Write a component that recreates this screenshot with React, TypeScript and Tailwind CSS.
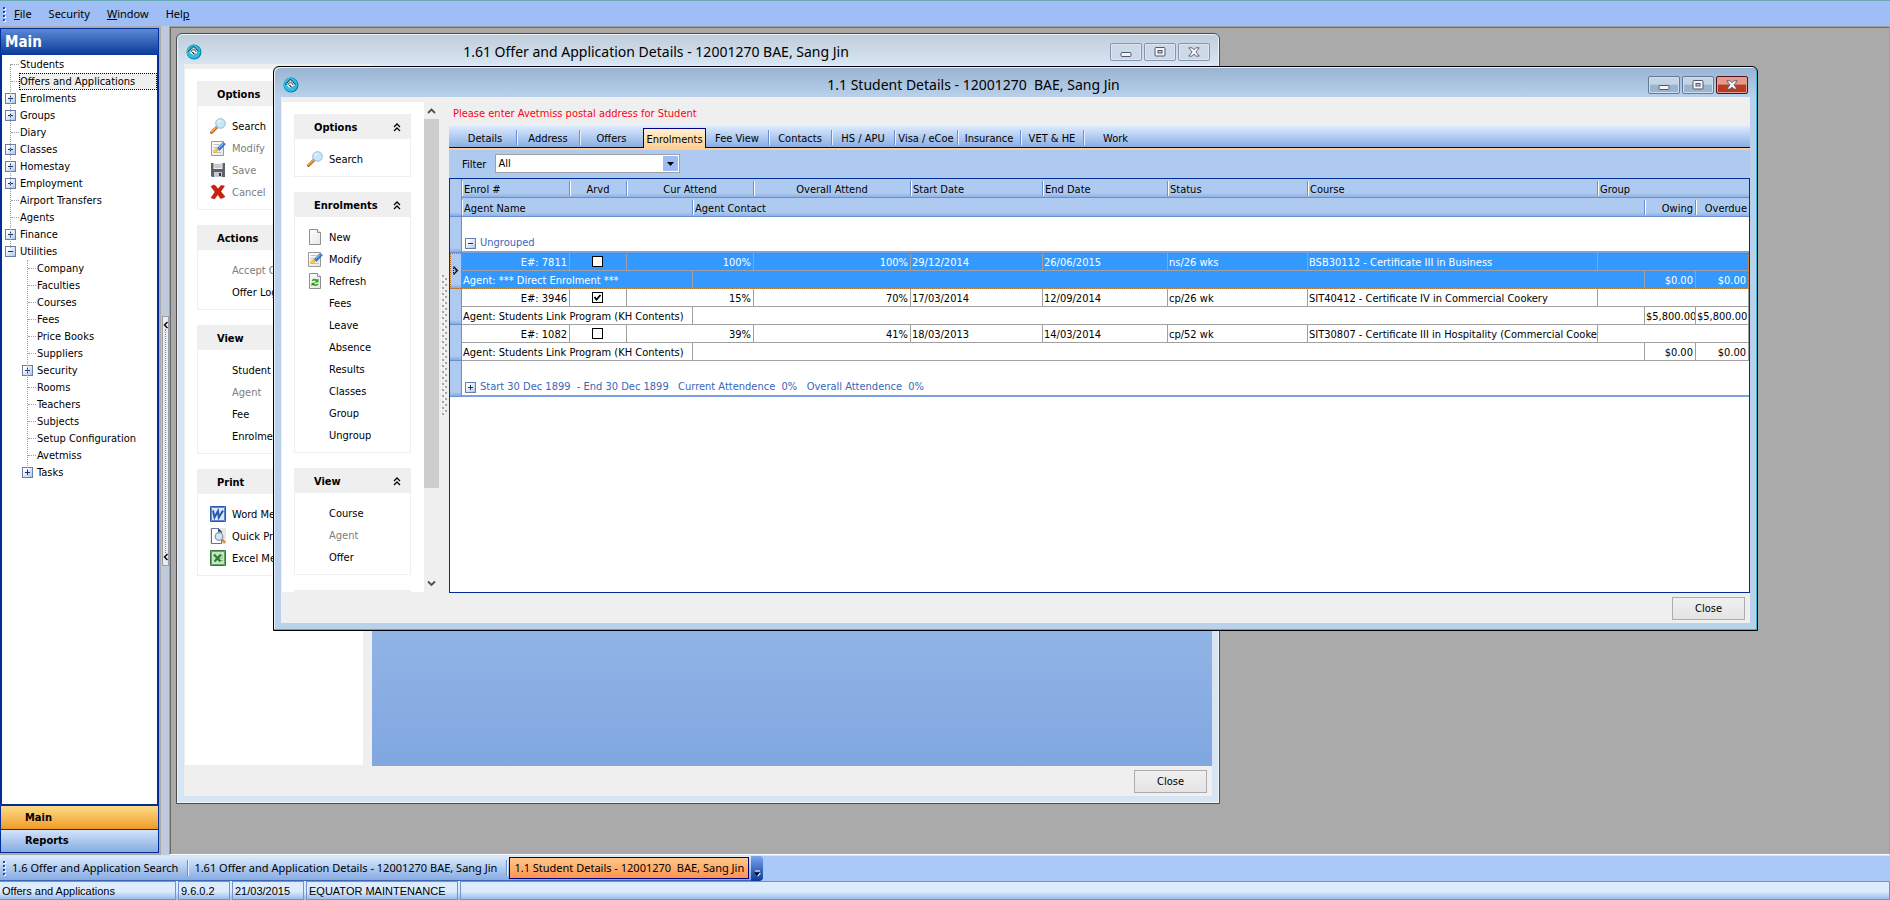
import type { ReactNode } from "react";
import { clsx } from "clsx";

type IconName = "search" | "modify" | "save" | "cancel" | "new" | "refresh" | "word" | "preview" | "excel";

interface Action {
  label: string;
  icon?: IconName;
  disabled?: boolean;
}

interface ActionGroup {
  title: string;
  items: Action[];
}

interface TreeItem {
  label: string;
  state?: "open" | "closed";
  selected?: boolean;
}

interface Enrolment {
  id: string;
  arrived: boolean;
  current: string;
  overall: string;
  start: string;
  end: string;
  status: string;
  course: string;
  agent: string;
  owing: string;
  overdue: string;
}

const rootItems: TreeItem[] = [
  { label: "Students" },
  { label: "Offers and Applications", selected: true },
  { label: "Enrolments", state: "closed" },
  { label: "Groups", state: "closed" },
  { label: "Diary" },
  { label: "Classes", state: "closed" },
  { label: "Homestay", state: "closed" },
  { label: "Employment", state: "closed" },
  { label: "Airport Transfers" },
  { label: "Agents" },
  { label: "Finance", state: "closed" },
  { label: "Utilities", state: "open" },
];

const utilityItems: TreeItem[] = [
  { label: "Company" },
  { label: "Faculties" },
  { label: "Courses" },
  { label: "Fees" },
  { label: "Price Books" },
  { label: "Suppliers" },
  { label: "Security", state: "closed" },
  { label: "Rooms" },
  { label: "Teachers" },
  { label: "Subjects" },
  { label: "Setup Configuration" },
  { label: "Avetmiss" },
  { label: "Tasks", state: "closed" },
];

const offerGroups: ActionGroup[] = [
  {
    title: "Options",
    items: [
      { label: "Search", icon: "search" },
      { label: "Modify", icon: "modify", disabled: true },
      { label: "Save", icon: "save", disabled: true },
      { label: "Cancel", icon: "cancel", disabled: true },
    ],
  },
  { title: "Actions", items: [{ label: "Accept Offer", disabled: true }, { label: "Offer Log" }] },
  {
    title: "View",
    items: [{ label: "Student" }, { label: "Agent", disabled: true }, { label: "Fee" }, { label: "Enrolment" }],
  },
  {
    title: "Print",
    items: [
      { label: "Word Merge", icon: "word" },
      { label: "Quick Print", icon: "preview" },
      { label: "Excel Merge", icon: "excel" },
    ],
  },
];

const studentGroups: ActionGroup[] = [
  { title: "Options", items: [{ label: "Search", icon: "search" }] },
  {
    title: "Enrolments",
    items: [
      { label: "New", icon: "new" },
      { label: "Modify", icon: "modify" },
      { label: "Refresh", icon: "refresh" },
      { label: "Fees" },
      { label: "Leave" },
      { label: "Absence" },
      { label: "Results" },
      { label: "Classes" },
      { label: "Group" },
      { label: "Ungroup" },
    ],
  },
  { title: "View", items: [{ label: "Course" }, { label: "Agent", disabled: true }, { label: "Offer" }] },
];

const tabs = [
  "Details", "Address", "Offers", "Enrolments", "Fee View", "Contacts",
  "HS / APU", "Visa / eCoe", "Insurance", "VET & HE", "Work",
];

const enrolments: Enrolment[] = [
  {
    id: "7811", arrived: false, current: "100%", overall: "100%", start: "29/12/2014", end: "26/06/2015",
    status: "ns/26 wks", course: "BSB30112 - Certificate III in Business",
    agent: "*** Direct Enrolment ***", owing: "$0.00", overdue: "$0.00",
  },
  {
    id: "3946", arrived: true, current: "15%", overall: "70%", start: "17/03/2014", end: "12/09/2014",
    status: "cp/26 wk", course: "SIT40412 - Certificate IV in Commercial Cookery",
    agent: "Students Link Program (KH Contents)", owing: "$5,800.00", overdue: "$5,800.00",
  },
  {
    id: "1082", arrived: false, current: "39%", overall: "41%", start: "18/03/2013", end: "14/03/2014",
    status: "cp/52 wk", course: "SIT30807 - Certificate III in Hospitality (Commercial Cookery)",
    agent: "Students Link Program (KH Contents)", owing: "$0.00", overdue: "$0.00",
  },
];

function Page() {
  return (
    <>
      <path d="M2.5 .5h8l3 3v12h-11z" fill="url(#paper)" stroke="#8f8f8f" />
      <path d="M10.5 .5v3h3" fill="#fff" stroke="#8f8f8f" />
    </>
  );
}

function ActionIcon({ name }: { name: IconName }) {
  return (
    <svg width="16" height="16" viewBox="0 0 16 16" className="shrink-0" aria-hidden="true">
      <defs>
        <linearGradient id="paper" x1="0" y1="0" x2="1" y2="1">
          <stop offset="0" stopColor="#fff" />
          <stop offset="1" stopColor="#e6e6e6" />
        </linearGradient>
      </defs>
      {name === "search" && (
        <>
          <path d="M1.5 14.5 7 9" stroke="#b5651d" strokeWidth="3" strokeLinecap="round" />
          <path d="M1.5 14 6 9.5" stroke="#f5a742" strokeWidth="1.5" strokeLinecap="round" />
          <circle cx="10.5" cy="5.5" r="4.8" fill="#c6e8fb" stroke="#9db7d3" />
          <path d="M7.5 5a3 3 0 0 1 3-2.5" stroke="#fff" fill="none" />
        </>
      )}
      {name === "new" && <Page />}
      {name === "modify" && (
        <>
          <path d="M1.5 1.5h12v14h-12z" fill="url(#paper)" stroke="#9a9a9a" />
          <path d="M3.5 4.5h6M3.5 7.5h4M3.5 12.5h8" stroke="#b9c3cc" />
          <path d="M3 12.5c0-3 2-4 4-4l1.5 1.5c-.5 2-3 3-5.5 2.5z" fill="#f3a61f" />
          <path d="M3 12.5 5 9l3 2z" fill="#ffd24a" />
          <path d="M7.5 8 13 2.5 15.5 4 9.5 10.5z" fill="#2f7fe0" stroke="#1b56ab" strokeWidth=".6" />
          <path d="M9 7.5 13.5 3.5" stroke="#9cc9ff" />
        </>
      )}
      {name === "save" && (
        <>
          <path d="M1 1h14v14H2l-1-1z" fill="#5c6268" />
          <path d="M3.5 1h9v6h-9z" fill="#eef1f3" />
          <path d="M4.5 3h7M4.5 5h7" stroke="#9aa3aa" />
          <path d="M4 10h8v5H4z" fill="#c3c9ce" />
          <path d="M9 11h2v3H9z" fill="#33383c" />
        </>
      )}
      {name === "cancel" && (
        <path
          d="M1 2.5 3.5 1l2 .8L8 5l3-3.6L14.5 2 10.8 7.5 15 12.8 12.5 14l-2 .5L7.8 10.6 4.5 15 1 13.8 5 8z"
          fill="#c9210e"
          stroke="#a51808"
          strokeWidth=".5"
        />
      )}
      {name === "refresh" && (
        <>
          <Page />
          <path d="M4.5 7.5c.8-2 4-2.5 5.5-1l1.5-1v4H7.5L8.8 8c-1-.9-2.5-.8-3 .2z" fill="#35a818" />
          <path d="M11.5 11c-.8 2-4 2.5-5.5 1l-1.5 1.2V9.8h3.700L7.2 10.800c1 .9 2.500.6 3 0z" fill="#2c9a12" />
        </>
      )}
      {name === "word" && (
        <>
          <path d="M.5 .5h15v15H.5z" fill="#dce8fa" stroke="#2a56a8" />
          <path d="M1.5 1.5h13v13h-13z" fill="none" stroke="#5e8ad4" />
          <path d="M3 4.5 4.5 11.5 8 5l.8 6.5L13 4.5" fill="none" stroke="#2b57ad" strokeWidth="2" />
        </>
      )}
      {name === "preview" && (
        <>
          <path d="M0 0h16v16H0z" fill="#e9e7e4" />
          <path d="M1.5 .5h7l3 3v12h-10z" fill="#fff" stroke="#5a72a8" />
          <path d="M8.5 .5v3h3" fill="#46536e" stroke="#46536e" />
          <circle cx="9" cy="8.5" r="3.8" fill="#cfe6f7" stroke="#7d93ad" strokeWidth="1.2" />
          <path d="M12 11.5 15 14.8" stroke="#d8843a" strokeWidth="2.4" />
        </>
      )}
      {name === "excel" && (
        <>
          <path d="M.5 .5h15v15H.5z" fill="#c9e4c3" stroke="#2f7a35" />
          <path d="M1.5 1.5h13v13h-13z" fill="none" stroke="#62a563" />
          <path d="M8 5.5h5M8 8h5M8 10.5h5" stroke="#7db87c" />
          <path d="M4 4.5 10.5 11.5M11 4.5 4.5 11.5" stroke="#2e7d36" strokeWidth="2.2" />
        </>
      )}
    </svg>
  );
}

function AppIcon() {
  return (
    <svg width="16" height="16" viewBox="0 0 16 16" className="shrink-0" aria-hidden="true">
      <circle cx="8" cy="8" r="7.5" fill="#0a7f9f" />
      <circle cx="7.6" cy="7.6" r="6.8" fill="#29bde8" />
      <path d="M7.5 3 12 7.5 10.5 9 8 11.5 5 9.5 3 7.5z" fill="#f1f6f8" />
      <path d="M2.5 7.5 7.5 2.5l5 5" fill="none" stroke="#1f2c34" strokeWidth="1.2" strokeDasharray="1.4 .7" />
      <path d="M5 8c0-3 5-3 5 0M6 8.5h1.5v1.5h2" fill="none" stroke="#2a3a44" />
    </svg>
  );
}

function Expander({ open }: { open: boolean }) {
  return (
    <svg width="11" height="11" viewBox="0 0 11 11" className="shrink-0" aria-hidden="true">
      <defs>
        <linearGradient id="expander" x1="0" y1="0" x2="1" y2="1">
          <stop offset=".2" stopColor="#fff" />
          <stop offset="1" stopColor="#a9c3ea" />
        </linearGradient>
      </defs>
      <rect x=".5" y=".5" width="10" height="10" fill="url(#expander)" stroke="#6b7fa6" />
      <path d={open ? "M3 5.5h5" : "M3 5.5h5M5.5 3v5"} stroke="#1d3264" />
    </svg>
  );
}

function TreeRow({ item, nested }: { item: TreeItem; nested?: boolean }) {
  return (
    <li className={clsx("flex h-[17px] items-center", nested ? "pl-5" : "pl-[3px]")}>
      <span className="flex w-[14px] shrink-0 items-center">
        {item.state ? (
          <Expander open={item.state === "open"} />
        ) : (
          <span className="ml-[6px] w-2 border-t border-dotted border-gray-400" />
        )}
      </span>
      <button
        className={clsx(
          "h-[17px] pl-px text-left leading-4 whitespace-nowrap",
          item.selected && "flex-1 bg-[#efefef] outline-1 -outline-offset-1 outline-black outline-dotted"
        )}
      >
        {item.label}
      </button>
    </li>
  );
}

function NavPanel() {
  return (
    <nav className="flex w-[159px] shrink-0 flex-col border border-[#002d96] bg-[#002d96]">
      <h1 className="flex h-[26px] items-center bg-linear-to-b from-[#5a89d8] to-[#0a3a98] pl-1 text-[15px] font-bold text-white">
        Main
      </h1>
      <div className="mx-px mb-[2px] flex-1 bg-white pt-px">
        <ul className="relative">
          <li className="absolute top-2 left-[8px] h-[184px] border-l border-dotted border-gray-400" aria-hidden="true" />
          {rootItems.map((item) => (
            <TreeRow key={item.label} item={item} />
          ))}
        </ul>
        <ul className="relative">
          <li className="absolute top-0 left-[25px] h-[210px] border-l border-dotted border-gray-400" aria-hidden="true" />
          {utilityItems.map((item) => (
            <TreeRow key={item.label} item={item} nested />
          ))}
        </ul>
      </div>
      <button className="mb-px h-[23px] bg-linear-to-b from-[#fbdc86] to-[#f09a1c] pl-6 text-left font-bold">Main</button>
      <button className="h-[22px] bg-linear-to-b from-[#d2e3fb] to-[#86abe2] pl-6 text-left font-bold">Reports</button>
    </nav>
  );
}

function NavSplitter() {
  return (
    <div className="ml-[2px] flex w-2 shrink-0 flex-col items-center justify-center bg-[#bfcbda]">
      <button
        aria-label="Collapse navigation"
        className="flex h-[250px] w-[7px] flex-col items-center justify-between border border-[#9d9d9d] bg-[#e4edf8] py-1"
      >
        <Chevron />
        <span className="flex-1 border-l border-dotted border-[#4f8fd6]" />
        <Chevron />
      </button>
    </div>
  );
}

function Chevron() {
  return (
    <svg width="5" height="8" viewBox="0 0 5 8" aria-hidden="true">
      <path d="M4.5 1 1.5 4l3 3" fill="none" stroke="#000" strokeWidth="1.4" />
    </svg>
  );
}

function Group({ group }: { group: ActionGroup }) {
  return (
    <section>
      <h3 className="flex h-[25px] items-center justify-between bg-[#efefef] pt-[2px] pr-[10px] pl-5 font-bold">
        {group.title}
        <svg width="8" height="9" viewBox="0 0 8 9" aria-hidden="true">
          <path d="M1 4 4 1l3 3M1 8l3-3 3 3" fill="none" stroke="#000" strokeWidth="1.3" />
        </svg>
      </h3>
      <ul className="border border-t-0 border-[#efefef] pt-[9px] pb-[6px] pl-3">
        {group.items.map((item) => (
          <li key={item.label}>
            <button disabled={item.disabled} className="flex h-[22px] items-center gap-[6px] whitespace-nowrap disabled:text-[#7d7d7d]">
              {item.icon ? <ActionIcon name={item.icon} /> : <span className="w-4" />}
              <span className="pt-px">{item.label}</span>
            </button>
          </li>
        ))}
      </ul>
    </section>
  );
}

function CaptionButton({ kind, active }: { kind: "Minimise" | "Maximise" | "Close window"; active?: boolean }) {
  const close = kind === "Close window";
  return (
    <button
      aria-label={kind}
      className={clsx(
        "flex h-[18px] w-8 items-center justify-center rounded-[2px] border",
        !active && "border-[#8795b0] bg-[#cbd9e8] shadow-[inset_0_0_0_1px_#dbe6f1]",
        active && !close && "border-[#66799a] bg-linear-to-b from-[#c3d4e6] from-45% to-[#9bb4d0] to-50% shadow-[inset_0_0_0_1px_#cfdeed]",
        active && close && "border-[#4c1420] bg-linear-to-b from-[#e39a8c] from-45% to-[#b93a20] to-50% shadow-[inset_0_0_0_1px_#e0a095]"
      )}
    >
      <svg width="12" height="10" viewBox="0 0 12 10" aria-hidden="true">
        {kind === "Minimise" && <rect x="1" y="5.5" width="10" height="4" rx="1" fill="#f4f4f4" stroke="#54586e" />}
        {kind === "Maximise" && (
          <>
            <rect x="1" y=".5" width="10" height="8.5" rx="1" fill="#f4f4f4" stroke="#54586e" />
            <rect x="4" y="3.5" width="4" height="2.5" fill="#b9cadc" stroke="#54586e" />
          </>
        )}
        {close && (
          <path
            d="M.8 .8h3.4L6 2.8 7.8 .8h3.4L8 4.9l3.2 4.2H7.8L6 7 4.2 9.1H.8L4 4.9z"
            fill="#f6f6f6"
            stroke="#54586e"
            strokeWidth=".9"
          />
        )}
      </svg>
    </button>
  );
}

interface WindowProps {
  title: string;
  active?: boolean;
  className: string;
  children: ReactNode;
}

function MdiWindow({ title, active, className, children }: WindowProps) {
  return (
    <section
      className={clsx(
        "absolute flex flex-col rounded-t-md border px-[7px] pb-[7px]",
        active
          ? "border-black bg-[#b9d1ea] bg-linear-to-b from-[#98b3d1] to-[#b9d1ea] to-[30px] shadow-[inset_-1px_-1px_0_#35b8d4,inset_1px_1px_0_#e8f1f8]"
          : "border-[#4c4c4c] bg-[#d7e4f2] bg-linear-to-b from-[#bfcddb] to-[#d7e4f2] to-[30px] shadow-[inset_0_0_0_1px_#eef4fa]",
        className
      )}
    >
      <header className="flex h-[30px] shrink-0 items-center px-[2px] pt-[6px]">
        <AppIcon />
        <h2 className="flex-1 text-center font-['Noto_Sans',sans-serif] text-sm leading-5 whitespace-pre">{title}</h2>
        <div className="flex gap-[2px]">
          <CaptionButton kind="Minimise" active={active} />
          <CaptionButton kind="Maximise" active={active} />
          <CaptionButton kind="Close window" active={active} />
        </div>
      </header>
      <div className="flex min-h-0 flex-1 flex-col bg-[#efefef]">
        {children}
        <footer className="flex h-[30px] shrink-0 items-center justify-end pr-[5px]">
          <button className="h-[23px] w-[73px] border border-[#acacac] bg-linear-to-b from-[#f0f0f0] to-[#e4e4e4] pt-px">Close</button>
        </footer>
      </div>
    </section>
  );
}

function TabStrip() {
  return (
    <div role="tablist" className="flex h-[24px] shrink-0 items-end border-b-2 border-[#ffcf92] bg-linear-to-b from-[#dcebfe] to-[#86abe2] pl-[5px] shadow-[inset_0_-1px_0_#000080]">
      {tabs.map((tab) => {
        const selected = tab === "Enrolments";
        return (
          <button
            key={tab}
            role="tab"
            aria-selected={selected}
            className={clsx(
              "flex w-[63px] items-center justify-center whitespace-nowrap",
              selected
                ? "h-5 border border-b-0 border-[#000080] bg-linear-to-b from-[#fff0d0] to-[#ffcf92]"
                : "h-[21px]"
            )}
          >
            <span
              className={clsx(
                "flex h-[15px] flex-1 items-center justify-center pt-[2px]",
                !selected && tab !== "Offers" && tab !== "Work" && "border-r border-[#6a8fd0] shadow-[1px_0_0_#e8f1fd]"
              )}
            >
              {tab}
            </span>
          </button>
        );
      })}
    </div>
  );
}

interface HeadCellProps {
  children?: ReactNode;
  span?: number;
  align?: "left" | "center" | "right";
  last?: boolean;
}

function HeadCell({ children, span, align = "left", last }: HeadCellProps) {
  return (
    <th
      colSpan={span}
      className="h-[19px] border-b border-[#6a8fd0] bg-[#aecaf0] bg-linear-to-t from-[#8fb2e6] to-[#aecaf0] to-[4px] p-0 font-normal"
    >
      <div
        className={clsx(
          "h-[15px] overflow-hidden border-l border-white pr-[2px] pl-px leading-[17px] whitespace-nowrap",
          !last && "border-r border-r-[#6a8fd0]",
          align === "left" && "text-left",
          align === "center" && "text-center",
          align === "right" && "text-right"
        )}
      >
        {children}
      </div>
    </th>
  );
}

interface CellProps {
  children?: ReactNode;
  span?: number;
  align?: "left" | "center" | "right";
}

function Cell({ children, span, align = "left" }: CellProps) {
  return (
    <td
      colSpan={span}
      className={clsx(
        "h-[18px] overflow-hidden border-r border-b border-[#a0a0a0] pr-[2px] pb-0 pl-px leading-[15px] whitespace-nowrap",
        align === "center" ? "pt-0 text-center" : "pt-[2px]",
        align === "right" && "text-right"
      )}
    >
      {children}
    </td>
  );
}

function Indicator({ children, span }: { children?: ReactNode; span?: number }) {
  return (
    <td
      rowSpan={span}
      className="border-r border-b border-[#6a8fd0] bg-[#aecaf0] bg-linear-to-t from-[#86abe2] to-[#aecaf0] to-[4px] p-0"
    >
      {children}
    </td>
  );
}

function GroupRow({ open, children }: { open: boolean; children: ReactNode }) {
  return (
    <tr>
      <Indicator />
      <td colSpan={12} className="h-9 border-b-2 border-[#7ba2e0] p-0 pl-[3px] align-bottom">
        <button className="flex h-4 items-center gap-1 whitespace-pre text-[#3a66b8]">
          <Expander open={open} />
          {children}
        </button>
      </td>
    </tr>
  );
}

function ArrivedBox({ enrolment }: { enrolment: Enrolment }) {
  return (
    <label className="relative mx-auto block size-[11px]">
      <input
        type="checkbox"
        aria-label={`Arrived ${enrolment.id}`}
        defaultChecked={enrolment.arrived}
        className="peer block size-[11px] appearance-none border border-black bg-white"
      />
      <svg viewBox="0 0 11 11" className="pointer-events-none absolute inset-0 hidden size-[11px] peer-checked:block" aria-hidden="true">
        <path d="M2.5 5 4.5 7.5 8.5 3" fill="none" stroke="#000" strokeWidth="1.8" />
      </svg>
    </label>
  );
}

function EnrolmentRows({ enrolment, selected }: { enrolment: Enrolment; selected: boolean }) {
  return (
    <tbody className={clsx(selected && "bg-[#3399ff] text-white outline-1 -outline-offset-1 outline-dotted outline-[#b5702c]")}>
      <tr>
        <Indicator span={2}>
          {selected && (
            <svg width="7" height="9" viewBox="0 0 7 9" className="mx-auto" aria-hidden="true">
              <path d="M1.5 .5 5.5 4.5l-4 4" fill="none" stroke="#000" strokeWidth="1.2" />
              <path d="M1.5 2v5M3.5 3.5v2" stroke="#000" strokeDasharray="1 1" />
            </svg>
          )}
        </Indicator>
        <Cell align="right">E#: {enrolment.id}</Cell>
        <Cell align="center">
          <ArrivedBox enrolment={enrolment} />
        </Cell>
        <Cell span={2} align="right">{enrolment.current}</Cell>
        <Cell align="right">{enrolment.overall}</Cell>
        <Cell>{enrolment.start}</Cell>
        <Cell>{enrolment.end}</Cell>
        <Cell>{enrolment.status}</Cell>
        <Cell>{enrolment.course}</Cell>
        <Cell span={3} />
      </tr>
      <tr>
        <Cell span={3}>Agent: {enrolment.agent}</Cell>
        <Cell span={7} />
        <Cell align="right">{enrolment.owing}</Cell>
        <Cell align="right">{enrolment.overdue}</Cell>
      </tr>
    </tbody>
  );
}

function EnrolmentTable() {
  return (
    <div className="min-h-0 flex-1 overflow-hidden border border-[#002d96] bg-white">
      <table className="w-full table-fixed border-separate border-spacing-0">
        <colgroup>
          <col className="w-3" />
          <col className="w-[108px]" />
          <col className="w-[57px]" />
          <col className="w-[66px]" />
          <col className="w-[61px]" />
          <col className="w-[157px]" />
          <col className="w-[132px]" />
          <col className="w-[125px]" />
          <col className="w-[140px]" />
          <col />
          <col className="w-[47px]" />
          <col className="w-[51px]" />
          <col className="w-[53px]" />
        </colgroup>
        <thead>
          <tr>
            <Indicator span={2} />
            <HeadCell>Enrol #</HeadCell>
            <HeadCell align="center">Arvd</HeadCell>
            <HeadCell span={2} align="center">Cur Attend</HeadCell>
            <HeadCell align="center">Overall Attend</HeadCell>
            <HeadCell>Start Date</HeadCell>
            <HeadCell>End Date</HeadCell>
            <HeadCell>Status</HeadCell>
            <HeadCell>Course</HeadCell>
            <HeadCell span={3} last>Group</HeadCell>
          </tr>
          <tr>
            <HeadCell span={3}>Agent Name</HeadCell>
            <HeadCell span={7}>Agent Contact</HeadCell>
            <HeadCell align="right">Owing</HeadCell>
            <HeadCell align="right" last>Overdue</HeadCell>
          </tr>
        </thead>
        <tbody>
          <GroupRow open>Ungrouped</GroupRow>
        </tbody>
        {enrolments.map((enrolment, i) => (
          <EnrolmentRows key={enrolment.id} enrolment={enrolment} selected={i === 0} />
        ))}
        <tbody>
          <GroupRow open={false}>
            {"Start 30 Dec 1899  - End 30 Dec 1899   Current Attendence  0%   Overall Attendence  0%"}
          </GroupRow>
        </tbody>
      </table>
    </div>
  );
}

function ScrollBar() {
  return (
    <div className="mt-[5px] mb-px flex w-[15px] shrink-0 flex-col" aria-hidden="true">
      <svg width="15" height="17" viewBox="0 0 15 17">
        <path d="M4 11l3.5-3.5L11 11" fill="none" stroke="#505050" strokeWidth="1.8" />
      </svg>
      <span className="h-[369px] bg-[#cdcdcd]" />
      <svg width="15" height="17" viewBox="0 0 15 17" className="mt-auto">
        <path d="M4 6.5 7.5 10 11 6.5" fill="none" stroke="#505050" strokeWidth="1.8" />
      </svg>
    </div>
  );
}

function StudentWindow() {
  return (
    <MdiWindow title="1.1 Student Details - 12001270  BAE, Sang Jin" active className="top-[39px] left-[103px] h-[565px] w-[1485px]">
      <div className="flex min-h-0 flex-1">
        <aside className="mt-[5px] mb-px ml-px flex w-[142px] shrink-0 flex-col gap-[15px] overflow-hidden bg-white pt-3 pr-[13px] pl-3">
          {studentGroups.map((group) => (
            <Group key={group.title} group={group} />
          ))}
          <div className="h-[25px] bg-[#efefef]" />
        </aside>
        <ScrollBar />
        <div className="flex w-[10px] shrink-0 items-center justify-center">
          <svg width="6" height="140" aria-hidden="true">
            <defs>
              <pattern id="grip" width="6" height="6" patternUnits="userSpaceOnUse">
                <path d="M1 0h2v2h-2zM4 3h2v2h-2z" fill="#a6a6a6" />
                <path d="M0 1h1v2h-1zM3 4h1v2h-1z" fill="#fff" />
              </pattern>
            </defs>
            <rect width="6" height="140" fill="url(#grip)" />
          </svg>
        </div>
        <div className="flex min-w-0 flex-1 flex-col">
          <p className="flex h-[29px] shrink-0 items-center pt-[5px] pl-1 text-[#ff0018]">Please enter Avetmiss postal address for Student</p>
          <TabStrip />
          <div className="flex h-[28px] shrink-0 items-center gap-[9px] bg-[#aecaf0] pl-[13px]">
            <label htmlFor="filter" className="pt-[2px]">Filter</label>
            <div className="relative -mt-px">
              <select
                id="filter"
                defaultValue="All"
                className="block h-[19px] w-[185px] appearance-none border border-[#a0a0a0] bg-white pt-px pl-[2px]"
              >
                <option>All</option>
              </select>
              <span className="pointer-events-none absolute top-[2px] right-[2px] flex h-[15px] w-[15px] items-center justify-center bg-[#9fbdf5]">
                <svg width="7" height="4" viewBox="0 0 7 4" aria-hidden="true">
                  <path d="M0 0h7L3.5 4z" />
                </svg>
              </span>
            </div>
          </div>
          <EnrolmentTable />
        </div>
      </div>
    </MdiWindow>
  );
}

function OfferWindow() {
  return (
    <MdiWindow title="1.61 Offer and Application Details - 12001270 BAE, Sang Jin" className="top-[6px] left-[6px] h-[771px] w-[1044px]">
      <div className="flex min-h-0 flex-1 gap-[9px]">
        <aside className="mt-[5px] mb-px ml-px flex w-[178px] shrink-0 flex-col gap-[15px] bg-white px-3 pt-3">
          {offerGroups.map((group) => (
            <Group key={group.title} group={group} />
          ))}
        </aside>
        <div className="flex-1 bg-linear-to-b from-[#dcebfe] to-[#80a7e0]" />
      </div>
    </MdiWindow>
  );
}

function Grip() {
  return (
    <svg width="3" height="16" viewBox="0 0 3 16" aria-hidden="true">
      <path d="M2 2v14" stroke="#fff" strokeWidth="2" strokeDasharray="2 2" />
      <path d="M1 1v14" stroke="#2d4a8a" strokeWidth="2" strokeDasharray="2 2" />
    </svg>
  );
}

function MenuBar() {
  return (
    <header className="flex h-[26px] shrink-0 items-center border-t border-[#6aaab4] bg-[#9ebef5] pl-[3px] font-['Noto_Sans',sans-serif] text-[11px]">
      <Grip />
      <button className="pl-2"><u>F</u>ile</button>
      <button className="pl-[17px]">Security</button>
      <button className="pl-[17px]"><u>W</u>indow</button>
      <button className="pl-[17px]">Hel<u>p</u></button>
    </header>
  );
}

function TaskBar() {
  return (
    <div className="flex h-[26px] shrink-0 border-t border-[#d5e4fa] bg-[#aac8f8] font-['Noto_Sans',sans-serif] text-[11px]">
      <div className="flex items-center border-b border-[#3c66b4] bg-linear-to-b from-[#dcebfd] to-[#86abe2] pl-[3px] whitespace-pre">
        <Grip />
        <button className="pr-[9px] pl-[6px]">1.6 Offer and Application Search</button>
        <span className="h-4 border-l border-[#6a8fd0] shadow-[1px_0_0_#e8f1fd]" />
        <button className="pr-[9px] pl-[6px]">1.61 Offer and Application Details - 12001270 BAE, Sang Jin</button>
        <span className="h-4 border-l border-[#6a8fd0] shadow-[1px_0_0_#e8f1fd]" />
        <button className="mx-[2px] h-[22px] border border-[#000080] bg-linear-to-b from-[#ffc88a] to-[#ff9350] px-1">
          1.1 Student Details - 12001270  BAE, Sang Jin
        </button>
      </div>
      <button aria-label="Toolbar options" className="flex w-3 items-end justify-center rounded-r-sm bg-linear-to-b from-[#7aa5ee] to-[#0a3a98] pb-1">
        <svg width="7" height="7" viewBox="0 0 7 7" aria-hidden="true">
          <path d="M1 1h5" stroke="#fff" />
          <path d="M1 3h6L4 6.5z" fill="#fff" />
          <path d="M0 2.5h6L3 6z" />
        </svg>
      </button>
    </div>
  );
}

function StatusBar() {
  const cell = "flex h-[19px] items-center border border-[#6f94d2] pl-[2px] whitespace-nowrap";
  return (
    <footer className="flex h-[19px] shrink-0 gap-[2px] bg-linear-to-b from-[#dcebfd] from-55% to-[#93b6e9] font-['Liberation_Sans',sans-serif]">
      <span className={clsx(cell, "w-[176px] border-l-0")}>Offers and Applications</span>
      <span className={clsx(cell, "w-[52px]")}>9.6.0.2</span>
      <span className={clsx(cell, "w-[72px]")}>21/03/2015</span>
      <span className={clsx(cell, "w-[152px]")}>EQUATOR MAINTENANCE</span>
      <span className={clsx(cell, "flex-1")} />
    </footer>
  );
}

export default function App() {
  return (
    <div className="flex h-screen flex-col overflow-hidden bg-[#aaaaaa] font-['DejaVu_Sans_Condensed','DejaVu_Sans',sans-serif] text-[11px] leading-4 text-black">
      <MenuBar />
      <div className="flex min-h-0 flex-1">
        <div className="flex py-[2px]">
          <NavPanel />
        </div>
        <NavSplitter />
        <main className="relative min-w-0 flex-1 overflow-hidden border border-[#a0a0a0] border-b-white bg-[#aaaaaa] shadow-[inset_1px_1px_0_#696969]">
          <OfferWindow />
          <StudentWindow />
        </main>
      </div>
      <TaskBar />
      <StatusBar />
    </div>
  );
}
